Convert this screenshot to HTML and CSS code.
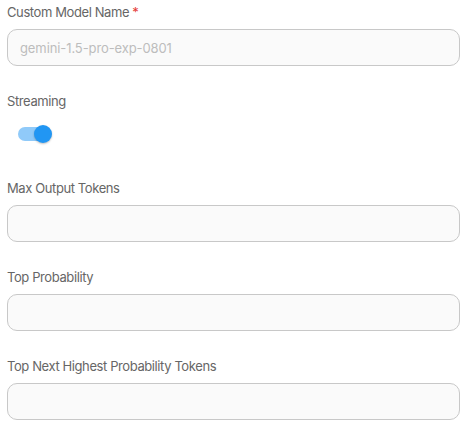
FILE: index.html
```html
<!DOCTYPE html>
<html lang="en">
<head>
<meta charset="utf-8">
<title>Model settings</title>
<link rel="stylesheet" href="styles.css">
</head>
<body>
<form class="form">
  <div class="field">
    <label class="label" for="model">Custom Model Name<span class="req">*</span></label>
    <input class="input" id="model" type="text" placeholder="gemini-1.5-pro-exp-0801">
  </div>
  <div class="field">
    <label class="label">Streaming</label>
    <div class="switch-row">
      <span class="switch is-on" role="switch" aria-checked="true">
        <span class="track"></span>
        <span class="thumb"></span>
      </span>
    </div>
  </div>
  <div class="field">
    <label class="label" for="maxtok">Max Output Tokens</label>
    <input class="input" id="maxtok" type="text">
  </div>
  <div class="field">
    <label class="label" for="topp">Top Probability</label>
    <input class="input" id="topp" type="text">
  </div>
  <div class="field">
    <label class="label" for="topk">Top Next Highest Probability Tokens</label>
    <input class="input" id="topk" type="text">
  </div>
</form>
</body>
</html>
```
FILE: styles.css
```css
html, body {
  margin: 0;
  background: #ffffff;
}
body {
  padding: 2px 6px 0 7px;
  font-family: Inter, "Noto Sans", sans-serif;
  font-size: 13px;
  color: #666666;
}
.form {
  display: flex;
  flex-direction: column;
}
.field {
  display: flex;
  flex-direction: column;
  margin-bottom: 25px;
}
.label {
  display: block;
  line-height: 20px;
  height: 20px;
  margin-bottom: 7px;
  letter-spacing: -0.4px;
}
.req {
  color: #e53935;
  margin-left: 3px;
}
.input {
  box-sizing: border-box;
  width: 100%;
  height: 37px;
  margin: 0;
  padding: 0 12px;
  border: 1px solid #c8c8c8;
  border-radius: 10px;
  background: #fafafa;
  font-family: inherit;
  font-size: 13px;
  color: #333;
  outline: none;
}
.input::placeholder {
  color: #bdbdbd;
  letter-spacing: -0.1px;
}
.switch-row {
  display: flex;
  height: 38px;
  align-items: center;
  margin-top: -3px;
}
.switch {
  position: relative;
  display: inline-block;
  width: 44px;
  height: 20px;
  margin-left: 11px;
}
.track {
  position: absolute;
  left: 0;
  top: 3px;
  width: 33px;
  height: 14px;
  border-radius: 7px;
  background: #90caf9;
}
.thumb {
  position: absolute;
  left: 16px;
  top: 1px;
  width: 18px;
  height: 18px;
  border-radius: 50%;
  background: #2196f3;
  box-shadow: 0 1px 2px rgba(0,0,0,0.25);
}
```
